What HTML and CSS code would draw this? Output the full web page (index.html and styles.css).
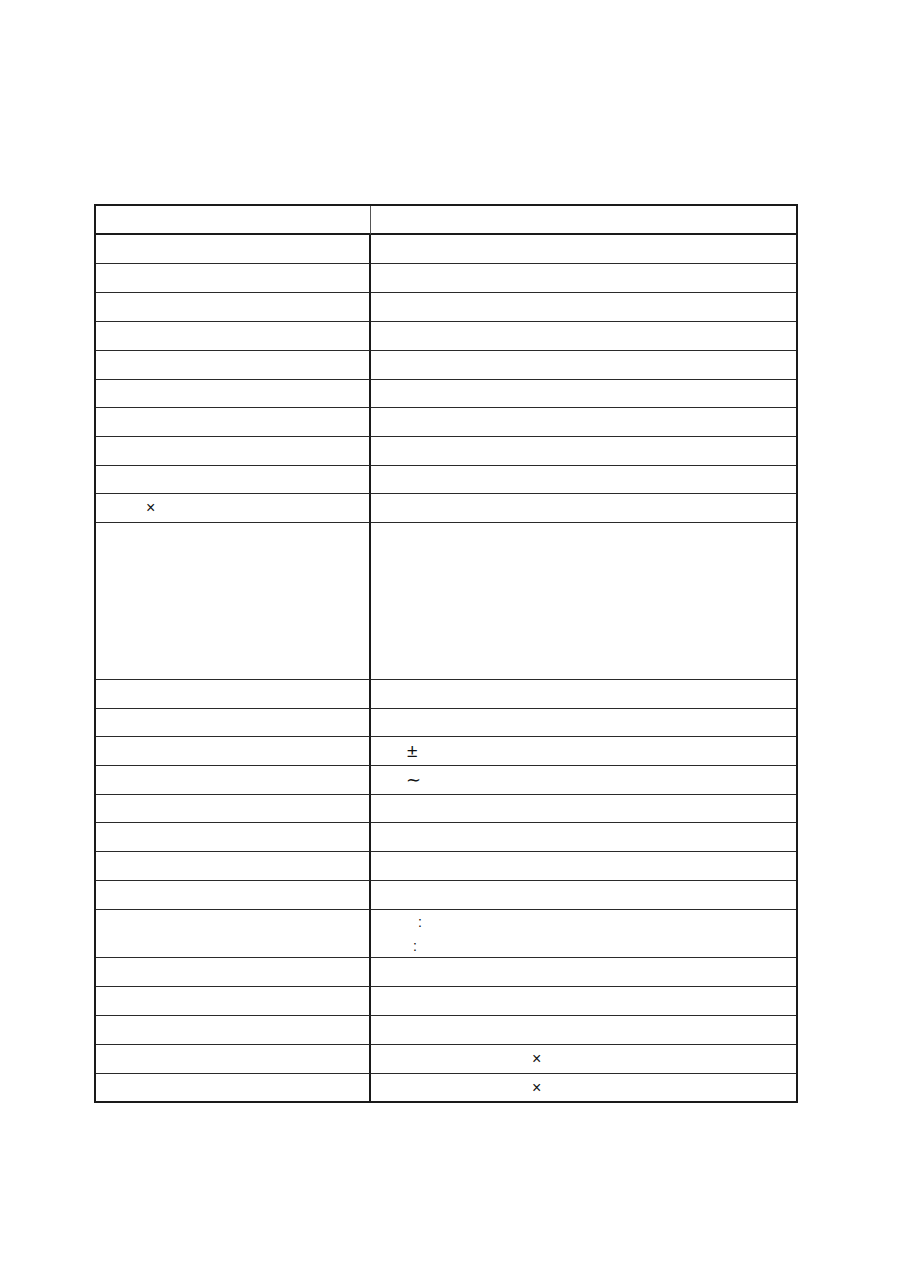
FILE: index.html
```html
<!DOCTYPE html>
<html lang="zh">
<head>
<meta charset="utf-8">
<title>Table</title>
<link rel="stylesheet" href="styles.css">
</head>
<body>
<div class="page">
  <div class="sheet">
    <div class="cell head c1"></div><div class="cell head c2"></div>
    <div class="cell c1 h29"></div><div class="cell c2 h29"></div>
    <div class="cell c1 h29"></div><div class="cell c2 h29"></div>
    <div class="cell c1 h29"></div><div class="cell c2 h29"></div>
    <div class="cell c1 h29"></div><div class="cell c2 h29"></div>
    <div class="cell c1 h29"></div><div class="cell c2 h29"></div>
    <div class="cell c1 h28"></div><div class="cell c2 h28"></div>
    <div class="cell c1 h29"></div><div class="cell c2 h29"></div>
    <div class="cell c1 h29"></div><div class="cell c2 h29"></div>
    <div class="cell c1 h28"></div><div class="cell c2 h28"></div>
    <div class="cell c1 h29"><span class="g g-x1">×</span></div><div class="cell c2 h29"></div>
    <div class="cell c1 tall"></div><div class="cell c2 tall"></div>
    <div class="cell c1 h29"></div><div class="cell c2 h29"></div>
    <div class="cell c1 h28"></div><div class="cell c2 h28"></div>
    <div class="cell c1 h29"></div><div class="cell c2 h29"><span class="g g-pm">±</span></div>
    <div class="cell c1 h29"></div><div class="cell c2 h29"><span class="g g-tilde">∼</span></div>
    <div class="cell c1 h28"></div><div class="cell c2 h28"></div>
    <div class="cell c1 h29"></div><div class="cell c2 h29"></div>
    <div class="cell c1 h29"></div><div class="cell c2 h29"></div>
    <div class="cell c1 h29"></div><div class="cell c2 h29"></div>
    <div class="cell c1 double"></div><div class="cell c2 double two"><span class="g g-col1">:</span><span class="g g-col2">:</span></div>
    <div class="cell c1 h29"></div><div class="cell c2 h29"></div>
    <div class="cell c1 h29"></div><div class="cell c2 h29"></div>
    <div class="cell c1 h29"></div><div class="cell c2 h29"></div>
    <div class="cell c1 h29"></div><div class="cell c2 h29"><span class="g g-x2">×</span></div>
    <div class="cell c1 h28 last"></div><div class="cell c2 h28 last"><span class="g g-x2">×</span></div>
  </div>
</div>
</body>
</html>
```

FILE: styles.css
```css
html, body {
  margin: 0;
  padding: 0;
  background: #ffffff;
}

body {
  font-family: "Liberation Sans", Arial, sans-serif;
  font-size: 16px;
  color: #111;
}

.page {
  width: 909px;
  height: 1286px;
  padding: 204px 0 0 94px;
  box-sizing: border-box;
}

.sheet {
  width: 704px;
  box-sizing: border-box;
  border: 2px solid #1a1a1a;
  display: grid;
  grid-template-columns: 275px 1fr;
}

.cell {
  box-sizing: border-box;
  border-bottom: 1px solid #2a2a2a;
  display: flex;
  align-items: center;
}

.c1 {
  border-right: 2px solid #1a1a1a;
}

.head {
  height: 29px;
  border-bottom: 2px solid #1a1a1a;
}

.head.c1 {
  border-right: 1px solid #555;
}

.head.c2 {
  padding-left: 1px;
}

.h29 { height: 29px; }
.h28 { height: 28px; }
.tall { height: 157px; }
.double { height: 48px; }
.last { border-bottom: none; height: 27px; }

.two {
  flex-direction: column;
  align-items: flex-start;
  justify-content: center;
}

.g {
  line-height: 24px;
  display: block;
  -webkit-font-smoothing: antialiased;
}

.g-x1 { padding-left: 50px; font-weight: 300; }
.g-pm { padding-left: 36px; font-size: 19px; }
.g-tilde { padding-left: 35px; font-size: 18px; font-family: "DejaVu Sans", sans-serif; }
.g-col1 { padding-left: 47px; font-size: 14px; }
.g-col2 { padding-left: 42px; font-size: 14px; }
.g-x2 { padding-left: 161px; }
```
